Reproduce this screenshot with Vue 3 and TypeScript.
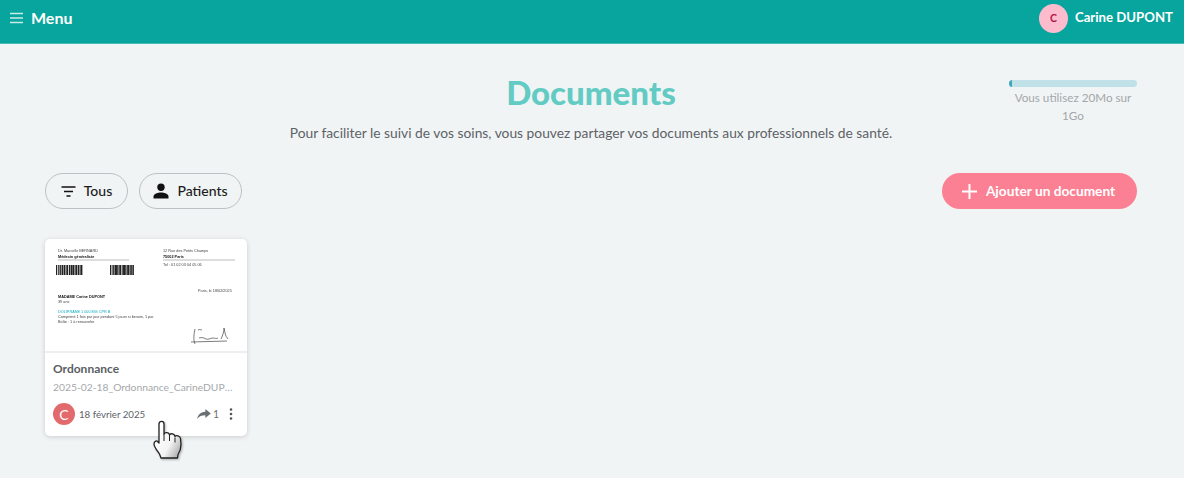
<script setup lang="ts">
const bars: number[] = [0, 2, 3.500, 5.500, 8, 9.500, 11, 13, 14.500, 17, 18.500, 20, 22, 23.500, 25];
const barWidths: number[] = [1.200, 0.8, 1.400, 2, 1, 1.200, 1.200, 1, 2.200, 1, 1.200, 1.400, 1, 1.200, 1.400];
</script>

<template>
  <div class="page">
    <header class="topbar">
      <div class="menu">
        <svg class="burger" width="13" height="12" viewBox="0 0 13 12"><path d="M0 1.500h13M0 6h13M0 10.500h13" stroke="#c9ecea" stroke-width="1.600" fill="none" /></svg>
        <span>Menu</span>
      </div>
      <div class="user">
        <span class="avatar">C</span>
        <span>Carine DUPONT</span>
      </div>
    </header>

    <main class="content">
      <section class="intro">
        <div></div>
        <div class="heading">
          <h1>Documents</h1>
          <p>Pour faciliter le suivi de vos soins, vous pouvez partager vos documents aux professionnels de santé.</p>
        </div>
        <div class="quota">
          <div class="track"><div class="fill" :style="{ width: '2%' }"></div></div>
          <div class="quota-text">Vous utilisez 20Mo sur 1Go</div>
        </div>
      </section>

      <section class="toolbar">
        <div class="filters">
          <button class="chip chip-tous">
            <svg width="15" height="11" viewBox="0 0 15 11"><path d="M.5 1h14M3 5.500h9M5.500 10h4" stroke="#111" stroke-width="1.500" fill="none" /></svg>
            <span>Tous</span>
          </button>
          <button class="chip chip-patients">
            <svg width="16" height="16" viewBox="0 0 16 16"><circle cx="8" cy="4.200" r="3.700" fill="#111" /><path d="M.5 15.500v-2c0-2.800 4.500-4 7.500-4s7.500 1.200 7.500 4v2z" fill="#111" /></svg>
            <span>Patients</span>
          </button>
        </div>
        <button class="add">
          <svg width="15" height="15" viewBox="0 0 15 15"><path d="M7.500 0v15M0 7.500h15" stroke="#fff" stroke-width="2" fill="none" /></svg>
          <span>Ajouter un document</span>
        </button>
      </section>

      <article class="card">
        <div class="preview">
          <svg width="202" height="112" viewBox="0 0 202 112">
            <g font-family="'Liberation Sans', sans-serif" font-size="3.800" fill="#444">
              <text x="13" y="13">Dr. Marcelle BERNARD</text>
              <text x="13" y="19" fill="#111" font-weight="700">Médecin généraliste</text>
              <text x="118" y="13">12 Rue des Petits Champs</text>
              <text x="118" y="19" fill="#111" font-weight="700">75002 Paris</text>
              <text x="118" y="27">Tel : 01 02 03 04 05 06</text>
              <text x="153" y="53">Paris, le 18/02/2025</text>
              <text x="13" y="59" fill="#111" font-weight="700">MADAME Carine DUPONT</text>
              <text x="13" y="64">39 ans</text>
              <text x="13" y="74" fill="#08a9c0">DOLIPRANE 1 000 MG CPR B</text>
              <text x="13" y="79">Comprimé 1 fois par jour pendant 5 jours si besoin, 1 par</text>
              <text x="13" y="84">Boîte : 1 à renouveler</text>
            </g>
            <path d="M13 21h71M118 21h72" stroke="#aaa" stroke-width=".8" />
            <g fill="#222">
              <rect v-for="(b, i) in bars" :key="'a' + i" :x="11 + b" y="26" :width="barWidths[i]" height="10" />
              <rect v-for="(b, i) in bars" :key="'b' + i" :x="65 + b * 0.9" y="26" :width="barWidths[i]" height="10" />
            </g>
            <path d="M146 103l36-1M150 90c-1 5-2 10 0 15M153 91c2-1 3 0 4 0M154 99c3-1 5 0 7 1s5-1 7-1 3 1 5 0M176 100c2-4 3-8 3-11 1 4 1 8 4 11" stroke="#444" stroke-width=".7" fill="none" />
          </svg>
        </div>
        <div class="info">
          <div class="doc-title">Ordonnance</div>
          <div class="doc-file">2025-02-18_Ordonnance_CarineDUPONT.pdf</div>
          <div class="meta">
            <span class="author">C</span>
            <span class="date">18 février 2025</span>
            <span class="share">
              <svg width="14" height="10" viewBox="0 0 15 11"><path d="M9 0l6 5-6 5V7C5 7 2 8 0 11c.5-4 3-7.500 9-8z" fill="#6b6f73" /></svg>
              <span>1</span>
            </span>
            <svg class="more" width="4" height="12" viewBox="0 0 4 12"><circle cx="2" cy="1.500" r="1.300" fill="#555" /><circle cx="2" cy="6" r="1.300" fill="#555" /><circle cx="2" cy="10.500" r="1.300" fill="#555" /></svg>
          </div>
        </div>
        <svg class="cursor" width="30" height="42" viewBox="0 0 30 42">
          <defs>
            <linearGradient id="hand" x1="0" y1="0.400" x2="0.800" y2="1">
              <stop offset="0" stop-color="#fff" />
              <stop offset="0.600" stop-color="#f4f4f4" />
              <stop offset="1" stop-color="#b5b5b5" />
            </linearGradient>
          </defs>
          <path d="M6 5c0-3.500 5-3.500 5 0v10c1-2 5-2 5.500 1 1-2 5-1.500 5.500 1.500 1-1.500 5-1 5.500 2l.5 6c0 4-1 7-3 10l-.5 3.500H8l-1.500-4c-2-3-5.500-7-5.500-10 0-2 2-3.500 3-3l2 2z" fill="url(#hand)" stroke="#222" stroke-width="1.300" stroke-linejoin="round" />
          <path d="M11 15v7M16.500 16v6M22 18.500v5" stroke="#222" stroke-width="1" fill="none" />
        </svg>
      </article>
    </main>
  </div>
</template>

<style>
html, body { margin: 0; background: #f1f4f5; }
</style>

<style scoped>
.page { width: 1184px; height: 478px; overflow: hidden; background: #f1f4f5; font-family: "Lato", "Noto Sans", sans-serif; color: #555; }
.topbar { height: 44px; box-sizing: border-box; background: #07a59d; border-bottom: 1px solid #45bcb6; display: flex; align-items: center; justify-content: space-between; padding: 0 11px 7px 10px; color: #fff; }
.menu { display: flex; align-items: center; gap: 8px; font-size: 16px; font-weight: 700; }
.menu span { margin-bottom: 2px; }
.user { display: flex; align-items: center; gap: 7px; font-size: 13.200px; font-weight: 700; }
.user span:last-child { margin-bottom: 2px; }
.avatar { width: 29px; height: 29px; border-radius: 50%; background: #fdbccd; color: #b0134e; font-size: 10.500px; display: flex; align-items: center; justify-content: center; }
.content { padding: 0 47px 0 45px; }
.intro { display: grid; grid-template-columns: 128px 1fr 128px; margin-top: 28px; height: 101px; }
.heading { text-align: center; }
.heading h1 { margin: 0; font-size: 33px; line-height: 41px; font-weight: 900; color: #62cbc3; }
.heading p { margin: 10px 0 0; font-size: 13.800px; line-height: 20px; color: #5d6266; }
.quota { padding-top: 8px; }
.track { height: 7px; border-radius: 4px; background: #bfe1e7; overflow: hidden; }
.fill { height: 100%; background: #3fa6bb; }
.quota-text { margin-top: 1px; font-size: 11.700px; line-height: 18px; color: #a3a7aa; text-align: center; }
.toolbar { display: flex; align-items: center; justify-content: space-between; height: 36px; }
.filters { display: flex; gap: 11px; }
.chip { height: 36px; box-sizing: border-box; border: 1px solid #bcc1c3; border-radius: 18px; background: transparent; display: flex; align-items: center; gap: 8px; padding: 0; justify-content: center; font-family: inherit; font-size: 14px; font-weight: 500; color: #1c1c1c; }
.chip span, .add span { margin-bottom: 1px; }
.chip-tous { width: 83px; gap: 8px; }
.chip-patients { width: 103px; }
.add { width: 195px; height: 36px; border: none; border-radius: 18px; background: #fb8093; color: #fff; display: flex; align-items: center; justify-content: center; gap: 9px; font-family: inherit; font-size: 13.700px; font-weight: 700; padding: 0 2px 0 0; }
.card { position: relative; margin-top: 30px; width: 202px; height: 197px; background: #fff; border-radius: 5px; box-shadow: 0 1px 5px rgba(0, 0, 0, .16); }
.preview { height: 112px; border-bottom: 2px solid #eceeef; overflow: hidden; }
.preview svg { display: block; filter: blur(.35px); }
.info { padding: 7px 8px 0; }
.doc-title { font-size: 12px; line-height: 18px; font-weight: 700; color: #5a5e62; }
.doc-file { margin-top: 1px; font-size: 10.300px; line-height: 16px; color: #a5a8ab; white-space: nowrap; overflow: hidden; text-overflow: ellipsis; }
.meta { display: flex; align-items: center; margin-top: 8px; }
.author { width: 22px; height: 22px; border-radius: 50%; background: #e26a6c; color: #fff; font-size: 14px; display: flex; align-items: center; justify-content: center; }
.date { margin-left: 4px; font-size: 9.700px; color: #5d6266; flex: 1; }
.share { display: flex; align-items: center; gap: 2px; font-size: 10.500px; color: #6b6f73; }
.more { margin: 0 6px 0 10px; }
.cursor { position: absolute; left: 108px; top: 180px; filter: drop-shadow(1px 1px 1px rgba(0, 0, 0, .3)); }
</style>
